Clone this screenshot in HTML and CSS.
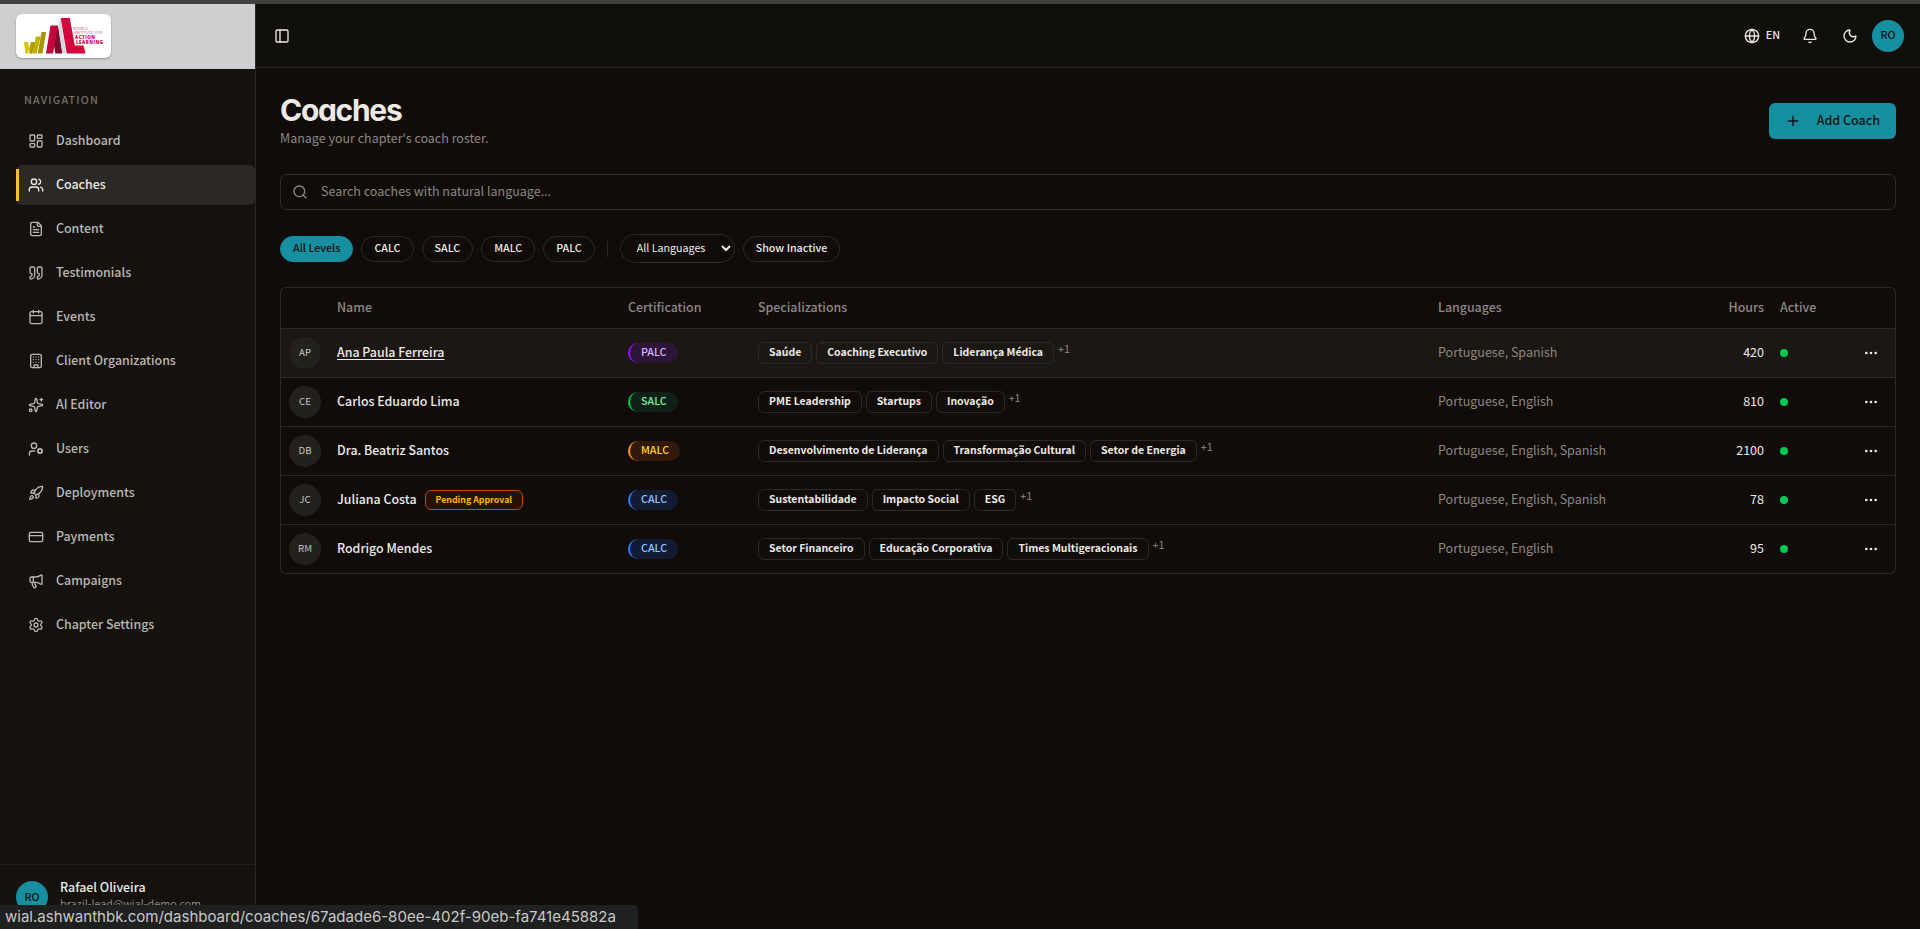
FILE: index.html
```html
<!DOCTYPE html>
<html lang="en">

<head>
    <meta charset="UTF-8">
    <meta name="viewport" content="width=device-width, initial-scale=1.0">
    <link rel="stylesheet" href="styles.css">
    <title>Coaches</title>
</head>

<body>
    <div class="app">
        <aside class="sidebar">
            <div class="brand">
                <div class="logo">
                    <svg width="80" height="38" viewBox="0 0 80 38">
                        <path d="M0 25h4l1 6 2-6h5l-4 11.500H5.500l-.5-4-1 4H1.500z" fill="#d4c400" />
                        <path d="M7 25h5l-4 11.500H5.500z" fill="#a99a12" />
                        <path d="M12 19.500h4.700l-4 17H8.500z" fill="#c2b000" />
                        <path d="M17.500 15h4.700l-3.700 21.500h-4.800z" fill="#a89600" />
                        <path d="M26.500 8.700H34l4.300 27.800h-7z" fill="#7d0a30" />
                        <path d="M26.500 8.700H34l-5 27.800h-7z" fill="#c4063c" />
                        <path d="M34.500 8l2-7 5.500 35.500h-3.500z" fill="#cfdbe0" />
                        <path d="M36.700 1h9.100l5 27.500h8.700l2 8H42.700z" fill="#d3063f" />
                        <text x="49" y="12.500" textLength="15" class="logo-light">WORLD</text>
                        <text x="50" y="17" textLength="28" class="logo-light">INSTITUTE FOR</text>
                        <text x="51" y="21.500" textLength="20" class="logo-bold">ACTION</text>
                        <text x="52" y="26.500" textLength="27" class="logo-bold">LEARNING</text>
                    </svg>
                </div>
            </div>
            <div class="nav-title">NAVIGATION</div>
            <nav class="nav">
                <a class="nav-item"><svg class="icon" viewBox="0 0 24 24"><rect width="7" height="9" x="3" y="3" rx="1" /><rect width="7" height="5" x="14" y="3" rx="1" /><rect width="7" height="9" x="14" y="12" rx="1" /><rect width="7" height="5" x="3" y="16" rx="1" /></svg><span>Dashboard</span></a>
                <a class="nav-item active"><svg class="icon" viewBox="0 0 24 24"><path d="M16 21v-2a4 4 0 0 0-4-4H6a4 4 0 0 0-4 4v2M16 3.128a4 4 0 0 1 0 7.744M22 21v-2a4 4 0 0 0-3-3.87" /><circle cx="9" cy="7" r="4" /></svg><span>Coaches</span></a>
                <a class="nav-item"><svg class="icon" viewBox="0 0 24 24"><path d="M15 2H6a2 2 0 0 0-2 2v16a2 2 0 0 0 2 2h12a2 2 0 0 0 2-2V7Z" /><path d="M14 2v4a2 2 0 0 0 2 2h4M10 9H8M16 13H8M16 17H8" /></svg><span>Content</span></a>
                <a class="nav-item"><svg class="icon" viewBox="0 0 24 24"><path d="M16 3a2 2 0 0 0-2 2v6a2 2 0 0 0 2 2 1 1 0 0 1 1 1v1a2 2 0 0 1-2 2 1 1 0 0 0-1 1v2a1 1 0 0 0 1 1 6 6 0 0 0 6-6V5a2 2 0 0 0-2-2z" /><path d="M5 3a2 2 0 0 0-2 2v6a2 2 0 0 0 2 2 1 1 0 0 1 1 1v1a2 2 0 0 1-2 2 1 1 0 0 0-1 1v2a1 1 0 0 0 1 1 6 6 0 0 0 6-6V5a2 2 0 0 0-2-2z" /></svg><span>Testimonials</span></a>
                <a class="nav-item"><svg class="icon" viewBox="0 0 24 24"><path d="M8 2v4M16 2v4M3 10h18" /><rect width="18" height="18" x="3" y="4" rx="2" /></svg><span>Events</span></a>
                <a class="nav-item"><svg class="icon" viewBox="0 0 24 24"><rect width="16" height="20" x="4" y="2" rx="2" /><path d="M9 22v-4h6v4M8 6h.01M16 6h.01M12 6h.01M12 10h.01M12 14h.01M16 10h.01M16 14h.01M8 10h.01M8 14h.01" /></svg><span>Client Organizations</span></a>
                <a class="nav-item"><svg class="icon" viewBox="0 0 24 24"><path d="M11.017 2.814a1 1 0 0 1 1.966 0l1.051 5.558a2 2 0 0 0 1.594 1.594l5.558 1.051a1 1 0 0 1 0 1.966l-5.558 1.051a2 2 0 0 0-1.594 1.594l-1.051 5.558a1 1 0 0 1-1.966 0l-1.051-5.558a2 2 0 0 0-1.594-1.594l-5.558-1.051a1 1 0 0 1 0-1.966l5.558-1.051a2 2 0 0 0 1.594-1.594zM20 2v4M22 4h-4" /><circle cx="4" cy="20" r="2" /></svg><span>AI Editor</span></a>
                <a class="nav-item"><svg class="icon" viewBox="0 0 24 24"><path d="M10 15H6a4 4 0 0 0-4 4v2" /><circle cx="9" cy="7" r="4" /><circle cx="18" cy="15" r="3" /><path d="m14.305 16.53.923-.382M15.228 13.852l-.923-.383M16.852 12.228l-.383-.923M16.852 17.772l-.383.924M19.148 12.228l.383-.923M19.53 18.696l-.382-.924M20.772 13.852l.924-.383M20.772 16.148l.924.383" /></svg><span>Users</span></a>
                <a class="nav-item"><svg class="icon" viewBox="0 0 24 24"><path d="M4.5 16.5c-1.5 1.26-2 5-2 5s3.74-.5 5-2c.71-.84.7-2.13-.09-2.91a2.18 2.18 0 0 0-2.91-.09z" /><path d="m12 15-3-3a22 22 0 0 1 2-3.95A12.88 12.88 0 0 1 22 2c0 2.72-.78 7.5-6 11a22.35 22.35 0 0 1-4 2z" /><path d="M9 12H4s.55-3.03 2-4c1.62-1.08 5 0 5 0M12 15v5s3.03-.55 4-2c1.08-1.62 0-5 0-5" /></svg><span>Deployments</span></a>
                <a class="nav-item"><svg class="icon" viewBox="0 0 24 24"><rect width="20" height="14" x="2" y="5" rx="2" /><path d="M2 10h20" /></svg><span>Payments</span></a>
                <a class="nav-item"><svg class="icon" viewBox="0 0 24 24"><path d="M11 6a13 13 0 0 0 8.4-2.8A1 1 0 0 1 21 4v12a1 1 0 0 1-1.6.8A13 13 0 0 0 11 14H5a2 2 0 0 1-2-2V8a2 2 0 0 1 2-2z" /><path d="M6 14a12 12 0 0 0 2.4 7.2 2 2 0 0 0 3.2-2.4A8 8 0 0 1 10 14M8 6v8" /></svg><span>Campaigns</span></a>
                <a class="nav-item"><svg class="icon" viewBox="0 0 24 24"><path d="M9.671 4.136a2.34 2.34 0 0 1 4.659 0 2.34 2.34 0 0 0 3.319 1.915 2.34 2.34 0 0 1 2.33 4.033 2.34 2.34 0 0 0 0 3.831 2.34 2.34 0 0 1-2.33 4.033 2.34 2.34 0 0 0-3.319 1.915 2.34 2.34 0 0 1-4.659 0 2.34 2.34 0 0 0-3.32-1.915 2.34 2.34 0 0 1-2.33-4.033 2.34 2.34 0 0 0 0-3.831A2.34 2.34 0 0 1 6.35 6.051a2.34 2.34 0 0 0 3.319-1.915" /><circle cx="12" cy="12" r="3" /></svg><span>Chapter Settings</span></a>
            </nav>
            <div class="account">
                <span class="user-avatar">RO</span>
                <div class="user">
                    <div class="user-name">Rafael Oliveira</div>
                    <div class="user-mail">brazil-lead@wial-demo.com</div>
                </div>
            </div>
        </aside>

        <div class="content">
            <header class="topbar">
                <svg class="icon" viewBox="0 0 24 24"><rect width="18" height="18" x="3" y="3" rx="2" /><path d="M9 3v18" /></svg>
                <div class="tools">
                    <span class="lang"><svg class="icon" viewBox="0 0 24 24"><circle cx="12" cy="12" r="10" /><path d="M12 2a14.5 14.5 0 0 0 0 20 14.5 14.5 0 0 0 0-20M2 12h20" /></svg><span>EN</span></span>
                    <svg class="icon bell" viewBox="0 0 24 24"><path d="M10.268 21a2 2 0 0 0 3.464 0M3.262 15.326A1 1 0 0 0 4 17h16a1 1 0 0 0 .74-1.673C19.41 13.956 18 12.499 18 8A6 6 0 0 0 6 8c0 4.499-1.411 5.956-2.738 7.326" /></svg>
                    <svg class="icon moon" viewBox="0 0 24 24"><path d="M20.985 12.486a9 9 0 1 1-9.473-9.472c.405-.022.617.46.402.803a6 6 0 0 0 8.268 8.268c.344-.215.825-.004.803.401" /></svg>
                    <span class="user-avatar">RO</span>
                </div>
            </header>

            <main class="main">
                <div class="page-head">
                    <div class="heading">
                        <h1>Coaches</h1>
                        <p>Manage your chapter's coach roster.</p>
                    </div>
                    <button class="add"><svg class="icon" viewBox="0 0 24 24"><path d="M5 12h14M12 5v14" /></svg><span>Add Coach</span></button>
                </div>

                <div class="search">
                    <svg class="icon" viewBox="0 0 24 24"><path d="m21 21-4.34-4.34" /><circle cx="11" cy="11" r="8" /></svg>
                    <input type="text" placeholder="Search coaches with natural language...">
                </div>

                <div class="filters">
                    <button class="pill selected">All Levels</button>
                    <button class="pill">CALC</button>
                    <button class="pill">SALC</button>
                    <button class="pill">MALC</button>
                    <button class="pill">PALC</button>
                    <span class="divider"></span>
                    <button class="pill select">All Languages<svg width="10" height="8" viewBox="0 0 10 8"><path d="M1 2l4 4 4-4" /></svg></button>
                    <button class="pill">Show Inactive</button>
                </div>

                <div class="table-wrap">
                    <table>
                        <colgroup>
                            <col class="c-avatar"><col class="c-name"><col class="c-cert"><col class="c-spec"><col class="c-lang"><col class="c-hours"><col class="c-active"><col>
                        </colgroup>
                        <thead>
                            <tr><th></th><th>Name</th><th>Certification</th><th>Specializations</th><th>Languages</th><th class="num">Hours</th><th>Active</th><th></th></tr>
                        </thead>
                        <tbody>
                            <tr class="hovered">
                                <td><span class="avatar">AP</span></td>
                                <td class="text"><a class="name">Ana Paula Ferreira</a></td>
                                <td><span class="cert palc">PALC</span></td>
                                <td><div class="tags"><span class="tag">Saúde</span><span class="tag">Coaching Executivo</span><span class="tag">Liderança Médica</span><span class="more">+1</span></div></td>
                                <td class="text langs">Portuguese, Spanish</td>
                                <td class="text num">420</td>
                                <td><span class="dot"></span></td>
                                <td class="actions"><svg class="icon" viewBox="0 0 24 24"><circle cx="12" cy="12" r="1" /><circle cx="19" cy="12" r="1" /><circle cx="5" cy="12" r="1" /></svg></td>
                            </tr>
                            <tr>
                                <td><span class="avatar">CE</span></td>
                                <td class="text"><a class="name">Carlos Eduardo Lima</a></td>
                                <td><span class="cert salc">SALC</span></td>
                                <td><div class="tags"><span class="tag">PME Leadership</span><span class="tag">Startups</span><span class="tag">Inovação</span><span class="more">+1</span></div></td>
                                <td class="text langs">Portuguese, English</td>
                                <td class="text num">810</td>
                                <td><span class="dot"></span></td>
                                <td class="actions"><svg class="icon" viewBox="0 0 24 24"><circle cx="12" cy="12" r="1" /><circle cx="19" cy="12" r="1" /><circle cx="5" cy="12" r="1" /></svg></td>
                            </tr>
                            <tr>
                                <td><span class="avatar">DB</span></td>
                                <td class="text"><a class="name">Dra. Beatriz Santos</a></td>
                                <td><span class="cert malc">MALC</span></td>
                                <td><div class="tags"><span class="tag">Desenvolvimento de Liderança</span><span class="tag">Transformação Cultural</span><span class="tag">Setor de Energia</span><span class="more">+1</span></div></td>
                                <td class="text langs">Portuguese, English, Spanish</td>
                                <td class="text num">2100</td>
                                <td><span class="dot"></span></td>
                                <td class="actions"><svg class="icon" viewBox="0 0 24 24"><circle cx="12" cy="12" r="1" /><circle cx="19" cy="12" r="1" /><circle cx="5" cy="12" r="1" /></svg></td>
                            </tr>
                            <tr>
                                <td><span class="avatar">JC</span></td>
                                <td><div class="name-cell"><a class="name">Juliana Costa</a><span class="pending">Pending Approval</span></div></td>
                                <td><span class="cert calc">CALC</span></td>
                                <td><div class="tags"><span class="tag">Sustentabilidade</span><span class="tag">Impacto Social</span><span class="tag">ESG</span><span class="more">+1</span></div></td>
                                <td class="text langs">Portuguese, English, Spanish</td>
                                <td class="text num">78</td>
                                <td><span class="dot"></span></td>
                                <td class="actions"><svg class="icon" viewBox="0 0 24 24"><circle cx="12" cy="12" r="1" /><circle cx="19" cy="12" r="1" /><circle cx="5" cy="12" r="1" /></svg></td>
                            </tr>
                            <tr>
                                <td><span class="avatar">RM</span></td>
                                <td class="text"><a class="name">Rodrigo Mendes</a></td>
                                <td><span class="cert calc">CALC</span></td>
                                <td><div class="tags"><span class="tag">Setor Financeiro</span><span class="tag">Educação Corporativa</span><span class="tag">Times Multigeracionais</span><span class="more">+1</span></div></td>
                                <td class="text langs">Portuguese, English</td>
                                <td class="text num">95</td>
                                <td><span class="dot"></span></td>
                                <td class="actions"><svg class="icon" viewBox="0 0 24 24"><circle cx="12" cy="12" r="1" /><circle cx="19" cy="12" r="1" /><circle cx="5" cy="12" r="1" /></svg></td>
                            </tr>
                        </tbody>
                    </table>
                </div>
            </main>
        </div>
    </div>
    <div class="status">wial.ashwanthbk.com/dashboard/coaches/67adade6-80ee-402f-90eb-fa741e45882a</div>
</body>

</html>
```
FILE: styles.css
```css
* {
    margin: 0;
    padding: 0;
    box-sizing: border-box;
}

body {
    height: 929px;
    overflow: hidden;
    background-color: #110c09;
    border-top: 4px solid #40403f;
    color: #edeae5;
    font-family: 'Noto Sans CJK SC', sans-serif;
    font-size: 12.5px;
    line-height: 20px;
}

button,
input {
    font: inherit;
    color: inherit;
    background: none;
    border: none;
}

.icon {
    width: 16px;
    height: 16px;
    flex-shrink: 0;
    fill: none;
    stroke: currentColor;
    stroke-width: 2;
    stroke-linecap: round;
    stroke-linejoin: round;
}

.app {
    display: flex;
    height: 925px;
}

/* sidebar */
.sidebar {
    width: 256px;
    display: flex;
    flex-direction: column;
    background-color: #15120d;
    border-right: 1px solid #2b2927;
}

.brand {
    height: 65px;
    padding: 10px 16px;
    background-color: #cfcfd2;
}

.logo {
    width: 95px;
    height: 44px;
    padding: 3px 8px;
    border-radius: 6px;
    background-color: #fff;
    box-shadow: 0 1px 2px rgba(0, 0, 0, 0.3);
}

.logo-light {
    font: 4.2px 'Open Sans', sans-serif;
    fill: #dc6385;
}

.logo-bold {
    font: 800 4.4px 'Open Sans', sans-serif;
    fill: #d3063f;
}

.nav-title {
    padding: 21px 24px 0;
    color: #75716b;
    font-size: 10.7px;
    font-weight: 500;
    letter-spacing: 1.2px;
}

.nav {
    display: flex;
    flex-direction: column;
    gap: 4px;
    padding: 11px 0 0 16px;
    flex: 1;
}

.nav-item {
    position: relative;
    display: flex;
    align-items: center;
    gap: 12px;
    height: 40px;
    padding-left: 12px;
    border-radius: 6px;
    color: #b9b7b3;
    font-size: 12.4px;
    font-weight: 500;
}

.nav-item span,
.add span {
    padding-bottom: 2px;
}

.active {
    background-color: #2b2826;
    color: #edeae5;
}

.active::before {
    content: '';
    position: absolute;
    left: 0;
    top: 4px;
    width: 3px;
    height: 32px;
    background-color: #fbbf24;
}

.account {
    display: flex;
    align-items: center;
    gap: 12px;
    height: 65px;
    padding: 0 16px;
    border-top: 1px solid #211e1a;
}

.user-avatar {
    display: flex;
    align-items: center;
    justify-content: center;
    width: 32px;
    height: 32px;
    padding-bottom: 1px;
    border-radius: 50%;
    background-color: #168fa0;
    color: #0c1112;
    font-size: 10.7px;
    font-weight: 500;
}

.user {
    padding-bottom: 5px;
}

.user-name {
    font-size: 12.4px;
    font-weight: 500;
    line-height: 18px;
}

.user-mail {
    color: #8c8883;
    font-size: 10.75px;
    line-height: 16px;
}

/* top bar */
.content {
    flex: 1;
}

.topbar {
    display: flex;
    align-items: center;
    justify-content: space-between;
    height: 64px;
    padding: 0 16px 0 18px;
    background-color: #110f0a;
    border-bottom: 1px solid #2b2927;
}

.tools,
.lang {
    display: flex;
    align-items: center;
}

.lang {
    gap: 6px;
    font-size: 10.7px;
    font-weight: 500;
}

.lang span {
    padding-bottom: 2px;
}

.bell {
    margin-left: 22px;
}

.moon {
    margin: 0 14px 0 24px;
}

/* page */
.main {
    padding: 24px;
}

.page-head {
    display: flex;
    align-items: center;
    justify-content: space-between;
    height: 58px;
}

.heading {
    padding-bottom: 2px;
}

h1 {
    font: 700 30px/36px Inter, sans-serif;
    font-feature-settings: 'cv11';
    letter-spacing: -1.3px;
}

.page-head p {
    color: #8c8883;
}

.add {
    display: flex;
    align-items: center;
    gap: 16px;
    height: 36px;
    padding: 0 16px;
    border-radius: 6px;
    background-color: #168fa0;
    color: #0c1112;
    font-weight: 500;
}

.search {
    display: flex;
    align-items: center;
    gap: 13px;
    height: 36px;
    margin-top: 24px;
    padding: 0 11px;
    border: 1px solid #2b2927;
    border-radius: 6px;
    color: #8c8883;
}

.search input {
    flex: 1;
    padding-bottom: 2px;
}

.search input::placeholder {
    color: #8c8883;
}

.filters {
    display: flex;
    align-items: center;
    gap: 8px;
    margin-top: 24px;
}

.pill {
    height: 26px;
    padding: 0 12px 1px;
    border: 1px solid #2b2927;
    border-radius: 14px;
    font-size: 10.7px;
    font-weight: 500;
    line-height: 16px;
}

.selected {
    background-color: #168fa0;
    border-color: #168fa0;
    color: #0c1112;
}

.divider {
    width: 1px;
    height: 16px;
    margin: 0 4px;
    background-color: #2b2927;
}

.select {
    display: flex;
    align-items: center;
    justify-content: space-between;
    width: 115px;
    height: 29px;
    padding: 0 3px 1px 16px;
    border-radius: 15px;
    font-weight: 400;
}

.select svg {
    fill: none;
    stroke: currentColor;
    stroke-width: 2;
}

/* table */
.table-wrap {
    margin-top: 24px;
    border: 1px solid #2b2927;
    border-radius: 6px;
    overflow: hidden;
}

table {
    width: 100%;
    border-collapse: collapse;
    table-layout: fixed;
}

.c-avatar {
    width: 48px;
}

.c-name {
    width: 291px;
}

.c-cert {
    width: 130px;
}

.c-spec {
    width: 680px;
}

.c-lang {
    width: 274px;
}

.c-hours {
    width: 68px;
}

.c-active {
    width: 79px;
}

th {
    height: 40px;
    padding: 0 8px 1px;
    text-align: left;
    color: #8c8883;
    font-size: 12.4px;
    font-weight: 500;
}

td {
    height: 49px;
    padding: 0 8px;
    border-top: 1px solid #2b2927;
}

.text {
    padding-bottom: 2px;
}

.num {
    text-align: right;
}

.hovered {
    background-color: #1b1713;
}

.hovered .name {
    text-decoration: underline;
    text-underline-offset: 2px;
}

.avatar {
    display: flex;
    align-items: center;
    justify-content: center;
    width: 32px;
    height: 32px;
    padding-bottom: 1px;
    border-radius: 50%;
    background-color: #23211d;
    color: #c9c7c2;
    font-size: 9.6px;
}

.name {
    font-size: 12.4px;
    font-weight: 500;
}

.name-cell {
    display: flex;
    align-items: center;
    gap: 8px;
}

.name-cell .name {
    padding-bottom: 2px;
}

.pending {
    height: 20px;
    padding: 0 10px;
    border: 1px solid #bb4d00;
    border-radius: 6px;
    background-color: #241208;
    color: #ffb900;
    font-size: 8.8px;
    font-weight: 600;
    line-height: 17px;
}

.cert {
    display: block;
    width: fit-content;
    height: 20px;
    padding: 0 11px;
    border-left: 2px solid;
    border-radius: 10px;
    font-size: 10.7px;
    font-weight: 500;
    line-height: 18px;
}

.palc {
    background-color: #2c1536;
    border-color: #9810fa;
    color: #dab2ff;
}

.salc {
    background-color: #102016;
    border-color: #00c950;
    color: #7bf1a8;
}

.malc {
    background-color: #33190a;
    border-color: #fe9a00;
    color: #ffd230;
}

.calc {
    background-color: #131a33;
    border-color: #2b7fff;
    color: #8ec5ff;
}

.tags {
    display: flex;
    gap: 4px;
}

.tag {
    height: 22px;
    padding: 0 10px;
    border: 1px solid #2b2927;
    border-radius: 6px;
    font-size: 10.47px;
    font-weight: 600;
    line-height: 18px;
}

.more {
    color: #8c8883;
    font-size: 10.7px;
    line-height: 14px;
}

.langs {
    color: #8c8883;
}

.dot {
    display: block;
    width: 8px;
    height: 8px;
    border-radius: 50%;
    background-color: #00c950;
}

.actions {
    text-align: right;
}

.actions .icon {
    display: block;
    margin: 0 8px 0 auto;
}

/* link preview over the page corner */
.status {
    position: absolute;
    left: 0;
    bottom: 0;
    width: 638px;
    height: 24px;
    padding-left: 5px;
    border-top-right-radius: 4px;
    background-color: #1f2020;
    color: #c9c9c8;
    font: 15.03px/24px Inter, sans-serif;
    white-space: nowrap;
}
```
